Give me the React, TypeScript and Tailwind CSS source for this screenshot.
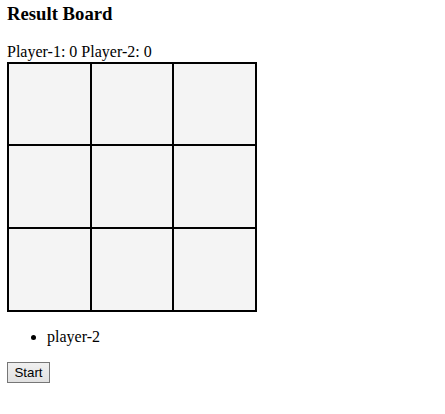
export default function App() {
  const cells = Array.from({ length: 9 })

  return (
    <div className="px-[7px] text-black" style={{ fontFamily: '"Liberation Serif", "Times New Roman", serif' }}>
      <h3 className="mt-[3px] mb-[18.72px] text-[18.72px] leading-[21.5px] font-bold">Result Board</h3>
      <div className="text-[16px] leading-[18.4px]">Player-1: 0 Player-2: 0</div>
      <div className="grid w-[250px] h-[250px] grid-cols-3 grid-rows-3 border border-black">
        {cells.map((_, i) => (
          <div key={i} className="border border-black bg-[#f4f4f4]" />
        ))}
      </div>
      <ul className="mt-4 mb-4 pl-10 list-disc text-[16px] leading-[18.4px]">
        <li>player-2</li>
      </ul>
      <button
        className="block w-[43px] h-[21px] border border-[#767676] bg-gradient-to-b from-[#f0f0f0] to-[#e1e1e1] text-[13.33px] leading-none text-black"
        style={{ fontFamily: '"Liberation Sans", Arial, sans-serif' }}
      >
        Start
      </button>
    </div>
  )
}
